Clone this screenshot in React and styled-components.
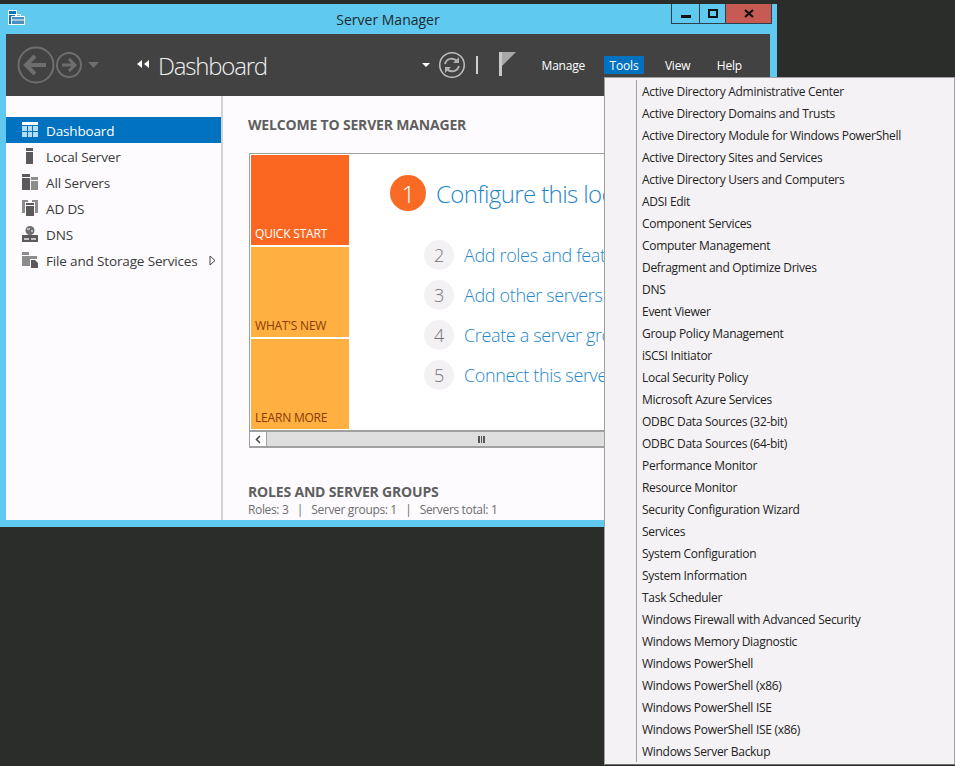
import React from "react";
import styled, { createGlobalStyle } from "styled-components";

const Global = createGlobalStyle`
  html, body { margin: 0; height: 100%; overflow: hidden; background: #2b2d2a; }
  body { font-family: "Open Sans", "Noto Sans", sans-serif; }
  * { box-sizing: border-box; }
`;

const Desktop = styled.div`
  position: relative;
  width: 955px;
  height: 766px;
  padding-top: 4px;
  overflow: hidden;
  background: #2b2d2a;
`;
const Win = styled.div`
  width: 777px;
  height: 523px;
  padding: 0 7px 7px 6px;
  display: flex;
  flex-direction: column;
  background: #5fc9ef;
`;
const TitleBar = styled.div`
  position: relative;
  height: 30px;
  flex: none;
  display: flex;
  align-items: center;
  justify-content: center;
  font-size: 14px;
  color: #1d2a30;
  padding-top: 1px;
`;
const AppIcon = styled.svg`
  position: absolute;
  left: 2px;
  top: 6px;
`;
const WinButtons = styled.div`
  position: absolute;
  top: 0;
  right: -2px;
  display: flex;
  height: 20px;
  border: 1px solid #2c3f4a;
  border-top: none;
`;
const WinButton = styled.div`
  width: ${p => p.w}px;
  display: flex;
  align-items: center;
  justify-content: center;
  background: ${p => p.bg || "transparent"};
  border-left: ${p => (p.first ? "none" : "1px solid #2c3f4a")};
`;
const Header = styled.header`
  height: 62px;
  flex: none;
  display: flex;
  align-items: center;
  background: #424242;
  padding: 0 0 0 11px;
`;
const NavIcons = styled.svg`
  flex: none;
  margin-right: 36px;
`;
const Crumb = styled.div`
  display: flex;
  align-items: center;
  gap: 8px;
  font-size: 24px;
  font-weight: 300;
  letter-spacing: -1.2px;
  color: #f0f0f0;
  flex: 1;
`;
const CrumbArrow = styled.svg`
  margin-top: -2px;
`;
const Tools = styled.svg`
  flex: none;
  margin-right: 17px;
`;
const Menus = styled.nav`
  display: flex;
  align-items: center;
  gap: 14.5px;
  padding-right: 22px;
`;
const MenuItem = styled.span`
  height: 18px;
  padding: 0 6px;
  margin-right: ${p => p.pull || 0}px;
  display: flex;
  align-items: center;
  font-size: 12px;
  letter-spacing: -0.2px;
  color: #fff;
  background: ${p => (p.active ? "#0072c0" : "transparent")};
`;
const Body = styled.div`
  flex: 1;
  display: flex;
  min-height: 0;
  background: #fdfbfd;
`;
const Sidebar = styled.aside`
  width: 217px;
  flex: none;
  padding-top: 21px;
  border-right: 2px solid #d4d2d4;
`;
const SideRow = styled.div`
  height: 26px;
  padding-left: 16px;
  display: flex;
  align-items: center;
  gap: 8px;
  font-size: 13.5px;
  letter-spacing: -0.15px;
  color: ${p => (p.active ? "#fff" : "#3a3a3a")};
  background: ${p => (p.active ? "#0072c0" : "transparent")};
`;
const SideLabel = styled.span`
  padding-top: 2px;
`;
const Chevron = styled.svg`
  margin-left: 3px;
`;
const Main = styled.main`
  flex: 1;
  min-width: 0;
  padding: 20px 0 0 25px;
  overflow: hidden;
`;
const SectionTitle = styled.h2`
  margin: 0;
  height: 18px;
  line-height: 18px;
  font-size: 14px;
  font-weight: 700;
  letter-spacing: -0.18px;
  color: #5f5f5f;
`;
const Panel = styled.section`
  margin: 19px 0 0 1px;
  width: 356px;
  height: 295px;
  border: 1px solid #a0a0a0;
  border-right: none;
  background: #fff;
  display: flex;
  flex-direction: column;
  overflow: hidden;
`;
const PanelBody = styled.div`
  flex: 1;
  display: flex;
  padding: 1px 0 0 1px;
  min-height: 0;
`;
const Tiles = styled.div`
  width: 98px;
  flex: none;
  display: flex;
  flex-direction: column;
  gap: 2px;
`;
const Tile = styled.div`
  height: 90px;
  padding: 0 0 3px 4px;
  display: flex;
  align-items: flex-end;
  font-size: 12px;
  letter-spacing: -0.2px;
  color: ${p => (p.primary ? "#fff" : "#8a3c08")};
  background: ${p => (p.primary ? "#fb6720" : "#ffb040")};
`;
const Steps = styled.div`
  flex: 1;
  min-width: 0;
  padding: 20px 0 0 41px;
`;
const FirstStep = styled.div`
  display: flex;
  align-items: center;
  gap: 10px;
  height: 36px;
  margin-bottom: 24px;
  white-space: nowrap;
  font-size: 24px;
  font-weight: 300;
  letter-spacing: -0.6px;
  color: #1f87cc;
`;
const BigNumber = styled.span`
  width: 36px;
  height: 36px;
  flex: none;
  border-radius: 50%;
  display: flex;
  align-items: center;
  justify-content: center;
  font-size: 24px;
  font-weight: 300;
  color: #fff;
  background: #f96a24;
`;
const Step = styled.div`
  height: 40px;
  margin-left: 34px;
  display: flex;
  align-items: center;
  gap: 10px;
  white-space: nowrap;
  font-size: 18px;
  font-weight: 300;
  letter-spacing: -0.35px;
  color: #1f87cc;
`;
const Number = styled.span`
  width: 30px;
  height: 30px;
  flex: none;
  border-radius: 50%;
  display: flex;
  align-items: center;
  justify-content: center;
  font-size: 18px;
  font-weight: 300;
  color: #737373;
  background: #f4f1f4;
`;
const ScrollBar = styled.div`
  height: 17px;
  flex: none;
  display: flex;
  border-top: 2px solid #a0a0a0;
  border-bottom: 1px solid #a0a0a0;
  background: #dedede;
`;
const ScrollButton = styled.div`
  width: 17px;
  flex: none;
  display: flex;
  align-items: center;
  justify-content: center;
  background: #fff;
  border-right: 1px solid #a0a0a0;
`;
const ScrollThumb = styled.div`
  width: 428px;
  flex: none;
  display: flex;
  align-items: center;
  justify-content: center;
`;
const Roles = styled.div`
  margin-top: 35px;
`;
const RolesMeta = styled.div`
  height: 18px;
  line-height: 18px;
  font-size: 12px;
  letter-spacing: -0.35px;
  color: #6e6e6e;
  white-space: pre;
`;
const Dropdown = styled.div`
  position: absolute;
  left: 604px;
  top: 77px;
  width: 351px;
  height: 688px;
  padding: 2px 0 0 31px;
  background: #f5f2f5;
  border: 1px solid #a0a0a0;
  border-bottom-color: #6c6c6c;
`;
const DropdownList = styled.ul`
  margin: 0;
  padding: 0;
  list-style: none;
  border-left: 1px solid #a0a0a0;
`;
const DropdownItem = styled.li`
  height: 22px;
  padding-left: 5px;
  display: flex;
  align-items: center;
  font-size: 12px;
  letter-spacing: -0.29px;
  color: #222;
  white-space: nowrap;
`;

const GridIcon = () => (
  <svg width="16" height="16" viewBox="0 0 16 16">
    <path fill="#fff" d="M0 0h16v3H0z" />
    <path fill="#b5dcf5" d="M0 4h5v5H0zM6 4h4v5H6zM11 4h5v5h-5zM0 10h5v5H0zM6 10h4v5H6zM11 10h5v5h-5z" />
  </svg>
);
const LocalIcon = () => (
  <svg width="16" height="16" viewBox="0 0 16 16">
    <path fill="#5a5a5a" d="M4 0h7v3H4zM4 4h7v12H4z" />
  </svg>
);
const AllIcon = () => (
  <svg width="16" height="16" viewBox="0 0 16 16">
    <path fill="#5a5a5a" d="M0 0h8v3H0zM0 4h8v12H0z" />
    <path fill="#8c8c8c" d="M9 3h7v3H9zM9 7h7v9H9z" />
  </svg>
);
const AdIcon = () => (
  <svg width="16" height="16" viewBox="0 0 16 16">
    <path fill="#8c8c8c" d="M0 0h6v2H3v11H0zM10 0h6v13h-3V2h-3z" />
    <path fill="#5a5a5a" d="M4 3h8v2H4zM4 6h8v10H4z" />
  </svg>
);
const DnsIcon = () => (
  <svg width="16" height="16" viewBox="0 0 16 16">
    <circle cx="8" cy="4.500" r="4.500" fill="#6f6f6f" />
    <path fill="#b5b5b5" d="M5 2h3v2H5zM9 4h2v2H9z" />
    <path fill="#5a5a5a" d="M0 9h16v7H0z" />
    <path fill="#c4c4c4" d="M2 12h5v2H2zM9 12h5v2H9z" />
  </svg>
);
const FolderIcon = () => (
  <svg width="16" height="16" viewBox="0 0 16 16">
    <path fill="#8c8c8c" d="M0 0h7v3H0zM0 4h15v3H8v7H0z" />
    <path fill="#5a5a5a" d="M9 8h4l3 3v5H9z" />
  </svg>
);

const sideItems = [
  { label: "Dashboard", Icon: GridIcon, active: true },
  { label: "Local Server", Icon: LocalIcon },
  { label: "All Servers", Icon: AllIcon },
  { label: "AD DS", Icon: AdIcon },
  { label: "DNS", Icon: DnsIcon },
  { label: "File and Storage Services", Icon: FolderIcon, more: true },
];

const steps = [
  ["2", "Add roles and features"],
  ["3", "Add other servers to manage"],
  ["4", "Create a server group"],
  ["5", "Connect this server to cloud services"],
];

const toolItems = [
  "Active Directory Administrative Center",
  "Active Directory Domains and Trusts",
  "Active Directory Module for Windows PowerShell",
  "Active Directory Sites and Services",
  "Active Directory Users and Computers",
  "ADSI Edit",
  "Component Services",
  "Computer Management",
  "Defragment and Optimize Drives",
  "DNS",
  "Event Viewer",
  "Group Policy Management",
  "iSCSI Initiator",
  "Local Security Policy",
  "Microsoft Azure Services",
  "ODBC Data Sources (32-bit)",
  "ODBC Data Sources (64-bit)",
  "Performance Monitor",
  "Resource Monitor",
  "Security Configuration Wizard",
  "Services",
  "System Configuration",
  "System Information",
  "Task Scheduler",
  "Windows Firewall with Advanced Security",
  "Windows Memory Diagnostic",
  "Windows PowerShell",
  "Windows PowerShell (x86)",
  "Windows PowerShell ISE",
  "Windows PowerShell ISE (x86)",
  "Windows Server Backup",
];

export default function App() {
  return (
    <Desktop>
      <Global />
      <Win>
        <TitleBar>
          <AppIcon width="17" height="16" viewBox="0 0 17 16">
            <path fill="#0f74bd" stroke="#fff" d="M.5.5h8v14h-8z" />
            <path fill="#fff" d="M1 4h7v1H1z" />
            <path fill="#4a8fc4" stroke="#fff" d="M3.500 6.500h13v8h-13z" />
            <path fill="none" stroke="#fff" d="M7.500 6.500v-2h5v2M4 10h12" />
          </AppIcon>
          Server Manager
          <WinButtons>
            <WinButton w={27} first>
              <svg width="10" height="8"><rect y="5" width="10" height="3" fill="#111" /></svg>
            </WinButton>
            <WinButton w={26}>
              <svg width="10" height="9"><rect x="1" y="1" width="8" height="7" fill="none" stroke="#111" strokeWidth="2" /></svg>
            </WinButton>
            <WinButton w={46} bg="#c75a52">
              <svg width="10" height="9"><path d="M1 1l8 7M9 1L1 8" stroke="#111" strokeWidth="2.2" /></svg>
            </WinButton>
          </WinButtons>
        </TitleBar>
        <Header>
          <NavIcons width="84" height="40" viewBox="0 0 84 40">
            <g fill="none" stroke="#6e6e6e">
              <circle cx="19" cy="20" r="17.500" strokeWidth="2" />
              <circle cx="52" cy="20" r="12" strokeWidth="2" />
              <path d="M9 20h20M18 11l-9 9 9 9" strokeWidth="4" />
              <path d="M45 20h13M52 14l6 6-6 6" strokeWidth="3" />
            </g>
            <path fill="#6e6e6e" d="M71 17h11l-5.500 6z" />
          </NavIcons>
          <Crumb>
            <CrumbArrow width="13" height="8" viewBox="0 0 13 8">
              <path fill="#fff" d="M5 0v8L0 4zM12 0v8L7 4z" />
            </CrumbArrow>
            Dashboard
          </Crumb>
          <Tools width="100" height="26" viewBox="0 0 100 26">
            <path fill="#fff" d="M3 11h8l-4 4z" />
            <circle cx="33" cy="13" r="12.250" fill="none" stroke="#c0c0c0" strokeWidth="1.500" />
            <path d="M26 12a7 7 0 0 1 12-3M40 14a7 7 0 0 1-12 3" fill="none" stroke="#b0b0b0" strokeWidth="2" />
            <path fill="#b0b0b0" d="M40 5v6h-6zM26 21v-6h6z" />
            <path fill="#d0d0d0" d="M57 4h2v18h-2z" />
            <path fill="#c8c8c8" d="M80 0h3v24h-3z" />
            <path fill="#a8a8a8" d="M83 0h14L83 14z" />
          </Tools>
          <Menus>
            <MenuItem pull={-2}>Manage</MenuItem>
            <MenuItem active>Tools</MenuItem>
            <MenuItem>View</MenuItem>
            <MenuItem>Help</MenuItem>
          </Menus>
        </Header>
        <Body>
          <Sidebar>
            {sideItems.map(({ label, Icon, active, more }) => (
              <SideRow key={label} active={active}>
                <Icon />
                <SideLabel>{label}</SideLabel>
                {more && (
                  <Chevron width="7" height="11" viewBox="0 0 7 11">
                    <path d="M1 1l5 4.500-5 4.500z" fill="#fff" stroke="#444" />
                  </Chevron>
                )}
              </SideRow>
            ))}
          </Sidebar>
          <Main>
            <SectionTitle>WELCOME TO SERVER MANAGER</SectionTitle>
            <Panel>
              <PanelBody>
                <Tiles>
                  <Tile primary>QUICK START</Tile>
                  <Tile>WHAT'S NEW</Tile>
                  <Tile>LEARN MORE</Tile>
                </Tiles>
                <Steps>
                  <FirstStep>
                    <BigNumber>1</BigNumber>
                    Configure this local server
                  </FirstStep>
                  {steps.map(([n, text]) => (
                    <Step key={n}>
                      <Number>{n}</Number>
                      {text}
                    </Step>
                  ))}
                </Steps>
              </PanelBody>
              <ScrollBar>
                <ScrollButton>
                  <svg width="6" height="9" viewBox="0 0 6 9">
                    <path d="M5 1L1.500 4.500 5 8" fill="none" stroke="#444" strokeWidth="1.500" />
                  </svg>
                </ScrollButton>
                <ScrollThumb>
                  <svg width="7" height="7"><path fill="#555" d="M0 0h2v7H0zM3 0h1v7H3zM5 0h2v7H5z" /></svg>
                </ScrollThumb>
              </ScrollBar>
            </Panel>
            <Roles>
              <SectionTitle>ROLES AND SERVER GROUPS</SectionTitle>
              <RolesMeta>Roles: 3   |   Server groups: 1   |   Servers total: 1</RolesMeta>
            </Roles>
          </Main>
        </Body>
      </Win>
      <Dropdown>
        <DropdownList>
          {toolItems.map(item => (
            <DropdownItem key={item}>{item}</DropdownItem>
          ))}
        </DropdownList>
      </Dropdown>
    </Desktop>
  );
}
